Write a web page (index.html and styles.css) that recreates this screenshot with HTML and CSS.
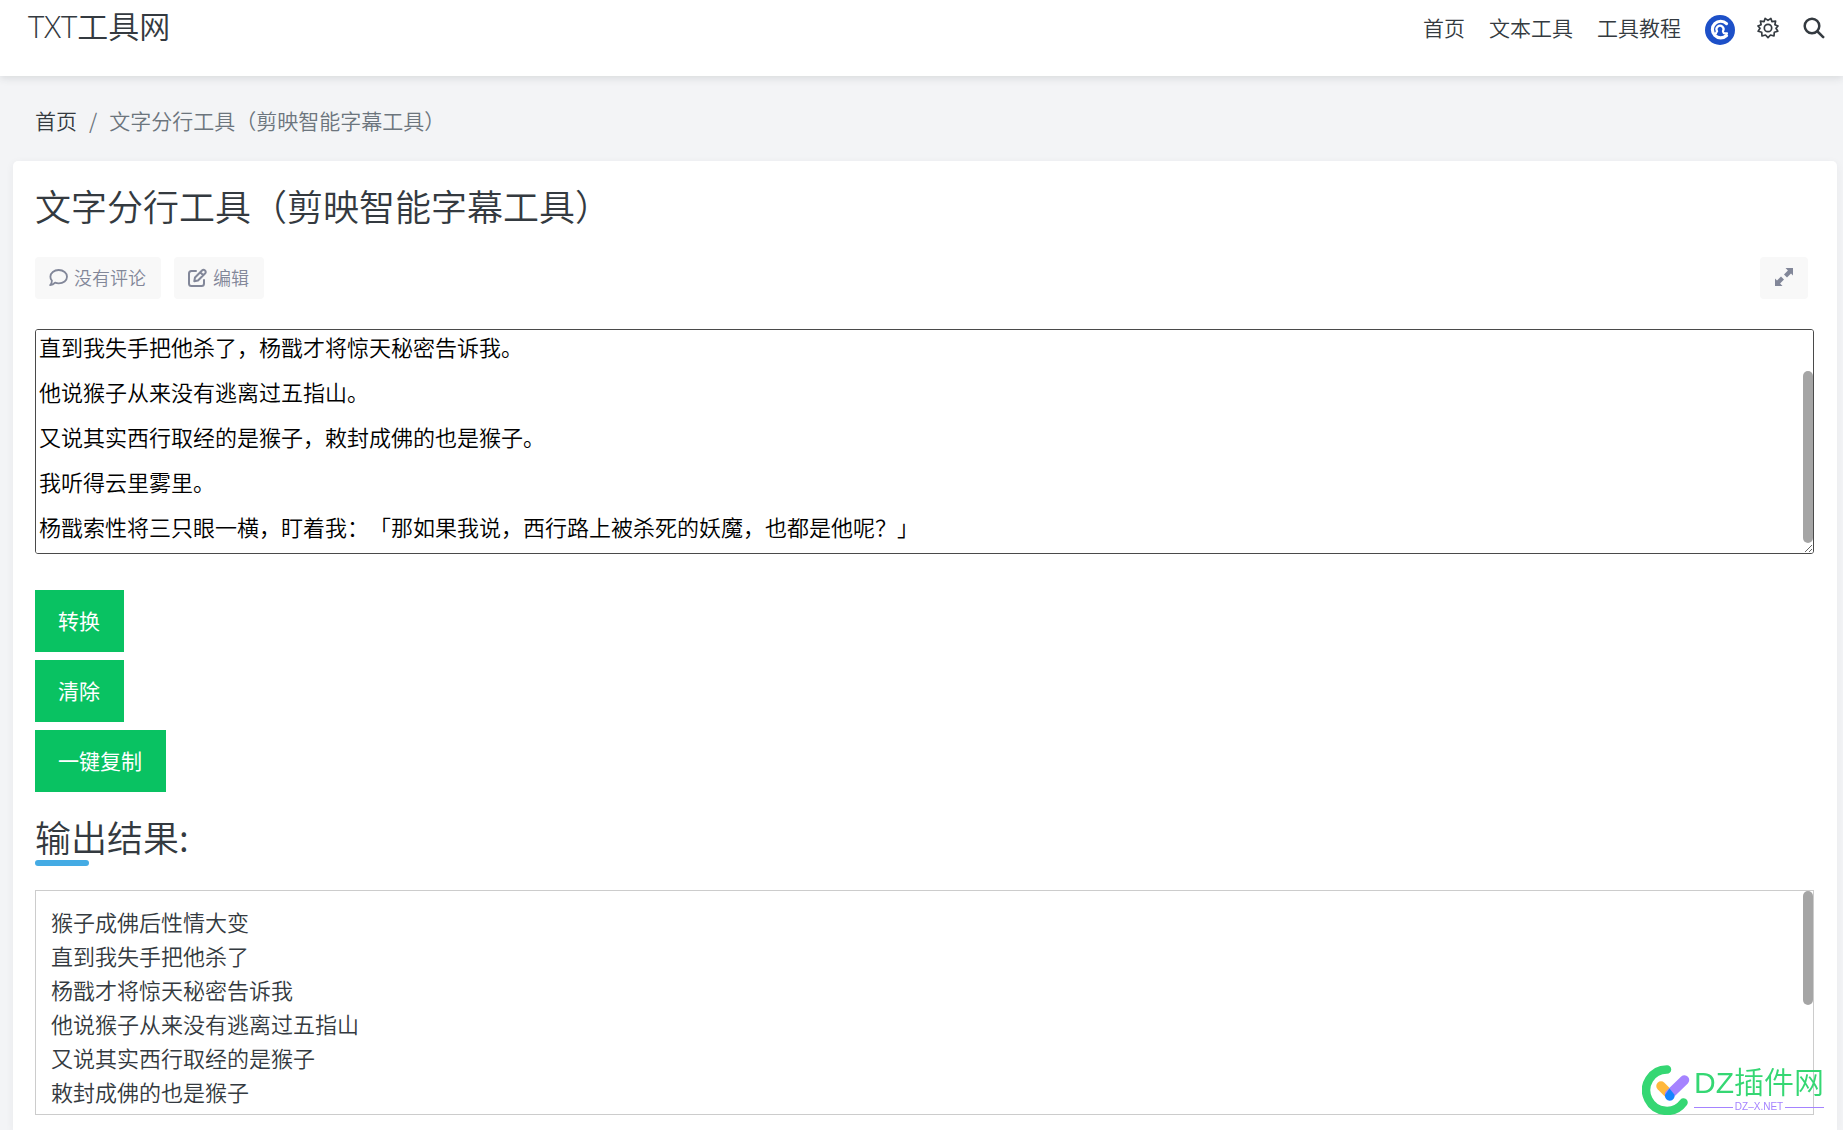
FILE: index.html
```html
<!DOCTYPE html>
<html lang="zh-CN">
<head>
<meta charset="utf-8">
<meta name="viewport" content="width=device-width, initial-scale=1">
<title>文字分行工具（剪映智能字幕工具）</title>
<link rel="stylesheet" href="styles.css">
</head>
<body>
<header class="site-header">
  <a class="brand" href="#">TXT工具网</a>
  <nav class="site-nav">
    <a href="#">首页</a>
    <a href="#">文本工具</a>
    <a href="#">工具教程</a>
    <a class="avatar" href="#" aria-label="用户">
      <svg width="30" height="30" viewBox="0 0 30 30"><circle cx="15" cy="15" r="15" fill="#1d50c8"/><path d="M21.500 8.600A8.300 8.300 0 1 0 21.500 20.500" fill="none" stroke="#fff" stroke-width="3.200" stroke-linecap="round"/><path d="M11 18.500q0-1 1.200-2.200a3.500 3.500 0 1 1 5.600 0q.5 2 2 2h2.200" fill="none" stroke="#fff" stroke-width="2.200" stroke-linecap="round"/><path d="M12.700 20l.8-4.400a1.900 1.900 0 1 1 3 0l.8 4.400z" fill="#1d50c8"/></svg>
    </a>
    <button class="icon-button" type="button" aria-label="设置">
      <svg width="22" height="22" viewBox="0 0 22 22" fill="none" stroke="#343a40" stroke-width="1.700" stroke-linejoin="round"><path d="M11 3.400 13.900 1.400 14.900 4.600 18.600 4.100 17.900 7.700 21 9 19 11.300 20.800 14.300 17.300 15.200 17 19 13.500 18 11 20.600 8.500 18 5 19 4.700 15.200 1.200 14.300 3 11.300 1 9 4.100 7.700 3.400 4.100 7.100 4.600 8.100 1.400Z"/><circle cx="11" cy="11" r="3.700"/></svg>
    </button>
    <button class="icon-button" type="button" aria-label="搜索">
      <svg width="22" height="22" viewBox="0 0 22 22" fill="none" stroke="#343a40" stroke-width="2.500" stroke-linecap="round"><circle cx="9" cy="9" r="7.300"/><path d="m14.500 14.500 5.700 5.700"/></svg>
    </button>
  </nav>
</header>

<nav class="breadcrumb" aria-label="面包屑">
  <a href="#">首页</a><span>/</span><span>文字分行工具（剪映智能字幕工具）</span>
</nav>

<main class="card">
  <h1 class="title">文字分行工具（剪映智能字幕工具）</h1>
  <div class="meta">
    <a class="tag" href="#"><svg width="19" height="19" viewBox="0 0 19 19" fill="none" stroke="#828799" stroke-width="1.800" stroke-linejoin="round"><path d="M2.900 12.700A6.600 6 0 0 1 1.400 8.700C1.400 5 5 2 9.700 2S18 5 18 8.700 14.400 15.400 9.700 15.400q-1.900 0-3.600-.7Q4 17 1.200 17.200 2.900 15.200 2.900 12.700Z"/></svg>没有评论</a>
    <a class="tag" href="#"><svg width="19" height="19" viewBox="0 0 19 19" fill="none" stroke="#828799" stroke-width="2" stroke-linecap="round" stroke-linejoin="round"><path d="M8 3H3.500Q1 3 1 5.500v10Q1 18 3.500 18h10q2.500 0 2.500-2.500V12"/><path d="m7 9.500 7-7q1.500-1.400 3 0t0 3l-7 7-3.700.8ZM12.500 4.500l2.500 2.500"/></svg>编辑</a>
    <button class="tag expand" type="button" aria-label="全屏"><svg width="18" height="18" viewBox="0 0 18 18" fill="#828799"><path d="M10.500 0H18v7.500l-2-1.900-4 4L9 6.500l3.900-4ZM0 10.500l2 1.900 4-4 3 3.100-3.900 4L7.500 18H0Z"/></svg></button>
  </div>

  <div class="scroll-box">
    <textarea class="source" id="source" aria-label="输入文字">猴子成佛后性情大变。
直到我失手把他杀了，杨戬才将惊天秘密告诉我。
他说猴子从来没有逃离过五指山。
又说其实西行取经的是猴子，敕封成佛的也是猴子。
我听得云里雾里。
杨戬索性将三只眼一横，盯着我：「那如果我说，西行路上被杀死的妖魔，也都是他呢？」</textarea>
    <span class="thumb thumb-source"></span>
  </div>

  <div class="actions">
    <button type="button">转换</button>
    <button type="button">清除</button>
    <button type="button">一键复制</button>
  </div>

  <h2 class="result-title">输出结果:</h2>
  <div class="scroll-box">
    <div class="result" tabindex="0">猴子成佛后性情大变<br>直到我失手把他杀了<br>杨戬才将惊天秘密告诉我<br>他说猴子从来没有逃离过五指山<br>又说其实西行取经的是猴子<br>敕封成佛的也是猴子</div>
    <span class="thumb thumb-result"></span>
  </div>
</main>

<aside class="watermark">
  <svg width="48" height="50" viewBox="0 0 48 50" fill="none" stroke-linecap="round"><path d="M25 4.500A20.700 20.700 0 1 0 41.500 37.500" stroke="#35d773" stroke-width="8.500"/><path d="M19 21l8 8" stroke="#ffb83d" stroke-width="9.500"/><path d="M42.500 15 27.500 29.500" stroke="#a583ff" stroke-width="9.500"/><path d="M27.500 23.500 32.300 29.500A4.800 4.800 0 1 1 23 30Z" fill="#1684ff"/></svg>
  <div class="watermark-text">
    <span class="watermark-name">DZ插件网</span>
    <span class="watermark-url">DZ–X.NET</span>
  </div>
</aside>
<script src="script.js"></script>
</body>
</html>
```
FILE: styles.css
```css
* { box-sizing: border-box; }

body {
  display: flex;
  flex-direction: column;
  min-height: 100vh;
  margin: 0;
  background: #f3f4f6;
  color: #343a40;
  font-family: "Noto Sans CJK SC", sans-serif;
  font-size: 21px;
  font-weight: 350;
  text-spacing-trim: space-all;
}

a { color: inherit; text-decoration: none; }
button, textarea { font: inherit; }
svg { display: block; flex: none; }

.site-header {
  display: flex;
  justify-content: space-between;
  align-items: flex-start;
  height: 76px;
  padding: 8px 18px 0 28px;
  background: #fff;
  box-shadow: 0 2px 8px rgba(52, 58, 64, .14);
}

.brand { font-family: "Open Sans", "Noto Sans CJK SC", sans-serif; font-size: 31px; line-height: 36px; }

.site-nav { display: flex; align-items: flex-start; gap: 24px; line-height: 38px; }
.icon-button { margin-top: 9px; padding: 0; border: 0; background: none; }
.avatar { margin: 7px -2px 0 0; }

.breadcrumb {
  display: flex;
  gap: 12px;
  padding: 29px 35px 26px;
  line-height: 30px;
  color: #6c757d;
}
.breadcrumb a { color: #343a40; }

.card {
  flex: 1;
  margin: 0 6px 0 13px;
  padding: 20px 23px 14px 22px;
  background: #fff;
  border-radius: 5px 5px 0 0;
  box-shadow: 0 2px 8px rgba(52, 58, 64, .06);
}

.title, .result-title { margin: 0; font-size: 36px; font-weight: inherit; line-height: 48px; }

.meta { display: flex; gap: 13px; margin: 28px 6px 30px 0; }
.tag {
  display: flex;
  align-items: center;
  gap: 6px;
  height: 42px;
  padding: 0 15px 2px 14px;
  border: 0;
  border-radius: 4px;
  background: #f8f8f8;
  color: #828799;
  font-size: 18px;
}
.expand { margin-left: auto; padding: 0 15px 2px; }

.scroll-box { position: relative; }

.source {
  display: block;
  width: 100%;
  height: 225px;
  padding: 2px 3px 4px;
  border: 1px solid #4a4a4a;
  border-radius: 3px;
  color: #000;
  font-size: 22px;
  line-height: 45px;
  resize: both;
}

.actions { display: flex; flex-direction: column; align-items: flex-start; gap: 8px; margin: 36px 0 20px; }
.actions button {
  height: 62px;
  padding: 0 24px 2px 23px;
  border: 0;
  background: #09c262;
  color: #fff;
  font-weight: 400;
}

.result-title::after {
  content: "";
  display: block;
  width: 54px;
  height: 6px;
  border-radius: 3px;
  background: #44abe4;
}

.result {
  height: 225px;
  margin-top: 24px;
  padding: 13px 15px 0;
  overflow: auto;
  border: 1px solid #ccc;
  font-size: 22px;
  line-height: 34px;
}

.source::-webkit-scrollbar, .result::-webkit-scrollbar { width: 0; }
.thumb {
  position: absolute;
  right: 1px;
  width: 10px;
  border-radius: 5px;
  background: #a5a5a5;
}
.thumb-source { top: 42px; height: 172px; }
.thumb-result { top: 1px; height: 114px; }

.watermark {
  position: fixed;
  right: 19px;
  bottom: 15px;
  display: flex;
  gap: 4px;
  color: #35d773;
}
.watermark-text { display: flex; flex-direction: column; }
.watermark-name { font-family: "Liberation Sans", "Noto Sans CJK SC", sans-serif; font-size: 30px; line-height: 36px; }
.watermark-url {
  display: flex;
  align-items: center;
  gap: 2px;
  color: #a583ff;
  font-family: "Liberation Sans", sans-serif;
  font-size: 10px;
  line-height: 12px;
}
.watermark-url::before, .watermark-url::after { content: ""; flex: 1; height: 1px; background: #a583ff; }
```
FILE: script.js
```js
const source = document.getElementById("source");
source.scrollTop = source.scrollHeight;
```
